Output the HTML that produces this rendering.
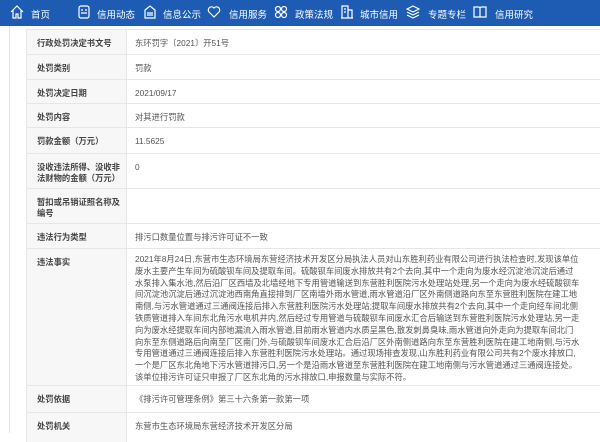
<!DOCTYPE html>
<html><head><meta charset="utf-8"><style>
*{margin:0;padding:0;box-sizing:border-box}
body{width:600px;height:433px;overflow:hidden;background:#fff;font-family:"Liberation Sans","Noto Sans CJK SC",sans-serif;color:#333;position:relative}
.nav{position:absolute;left:0;top:0;width:600px;height:26px;background:#1e5bb3;color:#fff;font-size:9.5px;white-space:nowrap}
.nav span{position:absolute;top:7px}
.nav svg{position:absolute;top:5px}
.side{position:absolute;left:9px;top:26px;width:1px;height:407px;background:#e4e4e4}
.tbl{position:absolute;left:26px;top:29px;width:580px}
.row{position:relative;border-top:1px solid #e6e6e6;border-left:1px solid #e6e6e6;font-size:8.3px}
.l{position:absolute;left:0;top:0;bottom:0;width:100px;background:#f7f7f7;border-right:1px solid #e6e6e6;padding:8px 0 0 10px;font-weight:bold;color:#444;line-height:11px}
.v{margin-left:100px;padding:8px 0 0 8px;color:#555;line-height:11px}
.f{padding-top:5px}
.f div{white-space:nowrap;line-height:11.8px}
</style></head><body>
<div class="nav">
<svg width="14" height="14" viewBox="0 0 14 14" style="left:10px" fill="none" stroke="#fff" stroke-width="1.2"><path d="M1 7L7 1l6 6M3 5v8h3V9h2v4h3V5"/></svg><span style="left:31px">首页</span>
<svg width="12" height="14" viewBox="0 0 12 14" style="left:78px" fill="none" stroke="#fff" stroke-width="1.2"><rect x="1" y="1" width="10" height="12" rx="2"/><path d="M3 5h2M3 8h6M7 5h2"/></svg><span style="left:97px">信用动态</span>
<svg width="12" height="14" viewBox="0 0 12 14" style="left:144px" fill="none" stroke="#fff" stroke-width="1.2"><path d="M1 5l5-4 5 4v8H1z M3 8h6M3 10h6"/></svg><span style="left:163px">信息公示</span>
<svg width="14" height="14" viewBox="0 0 14 14" style="left:207px" fill="none" stroke="#fff" stroke-width="1.2"><path d="M7 12L2 7a3 3 0 015-4 3 3 0 015 4z"/></svg><span style="left:229px">信用服务</span>
<svg width="14" height="14" viewBox="0 0 14 14" style="left:274px" fill="none" stroke="#fff" stroke-width="1.2"><circle cx="4" cy="4" r="2.5"/><circle cx="10" cy="4" r="2.5"/><circle cx="4" cy="10" r="2.5"/><circle cx="10" cy="10" r="2.5"/></svg><span style="left:295px">政策法规</span>
<svg width="12" height="14" viewBox="0 0 12 14" style="left:341px" fill="none" stroke="#fff" stroke-width="1.2"><path d="M1 13V1h6v12M7 5h4v8M0 13h12M3 4h2M3 7h2"/></svg><span style="left:360px">城市信用</span>
<svg width="14" height="14" viewBox="0 0 14 14" style="left:406px" fill="none" stroke="#fff" stroke-width="1.2"><path d="M7 1l6 3-6 3-6-3zM1 7l6 3 6-3M1 10l6 3 6-3"/></svg><span style="left:428px">专题专栏</span>
<svg width="14" height="14" viewBox="0 0 14 14" style="left:473px" fill="none" stroke="#fff" stroke-width="1.2"><path d="M1 2h5l1 1 1-1h5v10H1zM7 3v9"/></svg><span style="left:495px">信用研究</span>
</div>
<div class="side"></div>
<div class="tbl">
<div class="row" style="height:25px"><div class="l">行政处罚决定书文号</div><div class="v">东环罚字〔2021〕开51号</div></div>
<div class="row" style="height:25px"><div class="l">处罚类别</div><div class="v">罚款</div></div>
<div class="row" style="height:24px"><div class="l">处罚决定日期</div><div class="v">2021/09/17</div></div>
<div class="row" style="height:24px"><div class="l">处罚内容</div><div class="v">对其进行罚款</div></div>
<div class="row" style="height:26px"><div class="l">罚款金额（万元）</div><div class="v">11.5625</div></div>
<div class="row" style="height:35px"><div class="l">没收违法所得、没收非法财物的金额（万元）</div><div class="v">0</div></div>
<div class="row" style="height:35px"><div class="l">暂扣或吊销证照名称及编号</div><div class="v"></div></div>
<div class="row" style="height:25px"><div class="l">违法行为类型</div><div class="v">排污口数量位置与排污许可证不一致</div></div>
<div class="row" style="height:137px"><div class="l">违法事实</div><div class="v f">
<div>2021年8月24日,东营市生态环境局东营经济技术开发区分局执法人员对山东胜利药业有限公司进行执法检查时,发现该单位</div>
<div>废水主要产生车间为硫酸钡车间及提取车间。硫酸钡车间废水排放共有2个去向,其中一个走向为废水经沉淀池沉淀后通过</div>
<div>水泵排入集水池,然后沿厂区西墙及北墙经地下专用管道输送到东营胜利医院污水处理站处理,另一个走向为废水经硫酸钡车</div>
<div>间沉淀池沉淀后通过沉淀池西南角直接排到厂区南墙外雨水管道,雨水管道沿厂区外南侧道路向东至东营胜利医院在建工地</div>
<div>南侧,与污水管道通过三通阀连接后排入东营胜利医院污水处理站;提取车间废水排放共有2个去向,其中一个走向经车间北侧</div>
<div>铁质管道排入车间东北角污水电机井内,然后经过专用管道与硫酸钡车间废水汇合后输送到东营胜利医院污水处理站,另一走</div>
<div>向为废水经提取车间内部地漏流入雨水管道,目前雨水管道内水质呈黑色,散发刺鼻臭味,雨水管道向外走向为提取车间北门</div>
<div>向东至东侧道路后向南至厂区南门外,与硫酸钡车间废水汇合后沿厂区外南侧道路向东至东营胜利医院在建工地南侧,与污水</div>
<div>专用管道通过三通阀连接后排入东营胜利医院污水处理站。通过现场排查发现,山东胜利药业有限公司共有2个废水排放口,</div>
<div>一个是厂区东北角地下污水管道排污口,另一个是沿雨水管道至东营胜利医院在建工地南侧与污水管道通过三通阀连接处。</div>
<div>该单位排污许可证只申报了厂区东北角的污水排放口,申报数量与实际不符。</div>
</div></div>
<div class="row" style="height:27px"><div class="l">处罚依据</div><div class="v">《排污许可管理条例》第三十六条第一款第一项</div></div>
<div class="row" style="height:30px"><div class="l">处罚机关</div><div class="v">东营市生态环境局东营经济技术开发区分局</div></div>
</div>
</body></html>
